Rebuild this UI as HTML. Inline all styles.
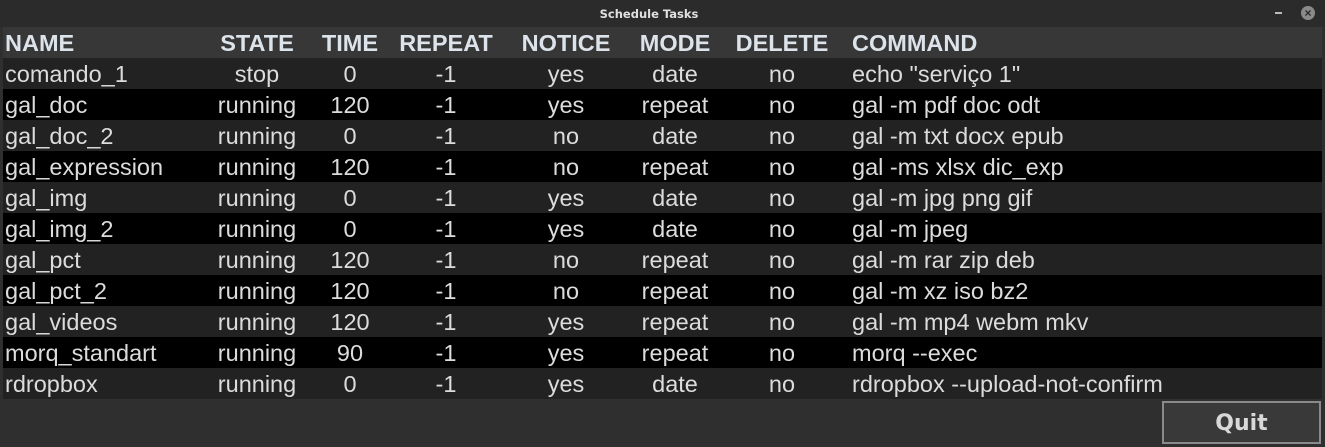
<!DOCTYPE html>
<html><head><meta charset="utf-8"><style>
body{margin:0;width:1325px;height:447px;background:#2f2f2f;overflow:hidden;font-family:"Liberation Sans",sans-serif;color:#dcdcdc;position:relative}
.title{position:absolute;left:0;top:0;width:1298px;height:27px;text-align:center;font:bold 11.5px "DejaVu Sans",sans-serif;line-height:28px;color:#e0e0e0}
.tb{position:absolute;left:0;top:0;width:1325px;height:27px;background:#2b2b2b}
.min{position:absolute;left:1275px;top:12px;width:7px;height:2px;background:#bbb}
.cls{position:absolute;left:1301px;top:6px;width:14px;height:14px;border-radius:50%;background:#8a8a8a;color:#2b2b2b;font:bold 12px sans-serif;line-height:14px;text-align:center}
.tbl{position:absolute;left:3px;top:27px;width:1319px}
.r{display:flex;height:31px;line-height:33px;font-size:23.5px;white-space:nowrap}
.h{background:#373737;font-weight:bold;color:#dde3ea}
.r div{text-align:center;overflow:visible}
.c0{width:207px;text-align:left!important;padding-left:2px}
.c1{width:90px}.c2{width:96px}.c3{width:96px}.c4{width:144px}.c5{width:74px}.c6{width:140px}
.c7{text-align:left!important;flex:1}
.a{background:#222}.b{background:#000}
.btn{position:absolute;left:1162px;top:401px;width:155px;height:39px;border:2px solid #8a8a8a;background:#393939;box-sizing:content-box;text-align:center;font:bold 22px "DejaVu Sans",sans-serif;line-height:42px;color:#d8d8d8}
</style></head><body>
<div class="tb"></div><div class="title">Schedule Tasks</div><div class="min"></div><div class="cls">×</div>
<div class="tbl">
<div class="r h"><div class="c0">NAME</div><div class="c1">STATE</div><div class="c2">TIME</div><div class="c3">REPEAT</div><div class="c4">NOTICE</div><div class="c5">MODE</div><div class="c6">DELETE</div><div class="c7">COMMAND</div></div>
<div class="r a"><div class="c0">comando_1</div><div class="c1">stop</div><div class="c2">0</div><div class="c3">-1</div><div class="c4">yes</div><div class="c5">date</div><div class="c6">no</div><div class="c7">echo "serviço 1"</div></div>
<div class="r b"><div class="c0">gal_doc</div><div class="c1">running</div><div class="c2">120</div><div class="c3">-1</div><div class="c4">yes</div><div class="c5">repeat</div><div class="c6">no</div><div class="c7">gal -m pdf doc odt</div></div>
<div class="r a"><div class="c0">gal_doc_2</div><div class="c1">running</div><div class="c2">0</div><div class="c3">-1</div><div class="c4">no</div><div class="c5">date</div><div class="c6">no</div><div class="c7">gal -m txt docx epub</div></div>
<div class="r b"><div class="c0">gal_expression</div><div class="c1">running</div><div class="c2">120</div><div class="c3">-1</div><div class="c4">no</div><div class="c5">repeat</div><div class="c6">no</div><div class="c7">gal -ms xlsx dic_exp</div></div>
<div class="r a"><div class="c0">gal_img</div><div class="c1">running</div><div class="c2">0</div><div class="c3">-1</div><div class="c4">yes</div><div class="c5">date</div><div class="c6">no</div><div class="c7">gal -m jpg png gif</div></div>
<div class="r b"><div class="c0">gal_img_2</div><div class="c1">running</div><div class="c2">0</div><div class="c3">-1</div><div class="c4">yes</div><div class="c5">date</div><div class="c6">no</div><div class="c7">gal -m jpeg</div></div>
<div class="r a"><div class="c0">gal_pct</div><div class="c1">running</div><div class="c2">120</div><div class="c3">-1</div><div class="c4">no</div><div class="c5">repeat</div><div class="c6">no</div><div class="c7">gal -m rar zip deb</div></div>
<div class="r b"><div class="c0">gal_pct_2</div><div class="c1">running</div><div class="c2">120</div><div class="c3">-1</div><div class="c4">no</div><div class="c5">repeat</div><div class="c6">no</div><div class="c7">gal -m xz iso bz2</div></div>
<div class="r a"><div class="c0">gal_videos</div><div class="c1">running</div><div class="c2">120</div><div class="c3">-1</div><div class="c4">yes</div><div class="c5">repeat</div><div class="c6">no</div><div class="c7">gal -m mp4 webm mkv</div></div>
<div class="r b"><div class="c0">morq_standart</div><div class="c1">running</div><div class="c2">90</div><div class="c3">-1</div><div class="c4">yes</div><div class="c5">repeat</div><div class="c6">no</div><div class="c7">morq --exec</div></div>
<div class="r a"><div class="c0">rdropbox</div><div class="c1">running</div><div class="c2">0</div><div class="c3">-1</div><div class="c4">yes</div><div class="c5">date</div><div class="c6">no</div><div class="c7">rdropbox --upload-not-confirm</div></div>
</div>
<div class="btn">Quit</div>
</body></html>
